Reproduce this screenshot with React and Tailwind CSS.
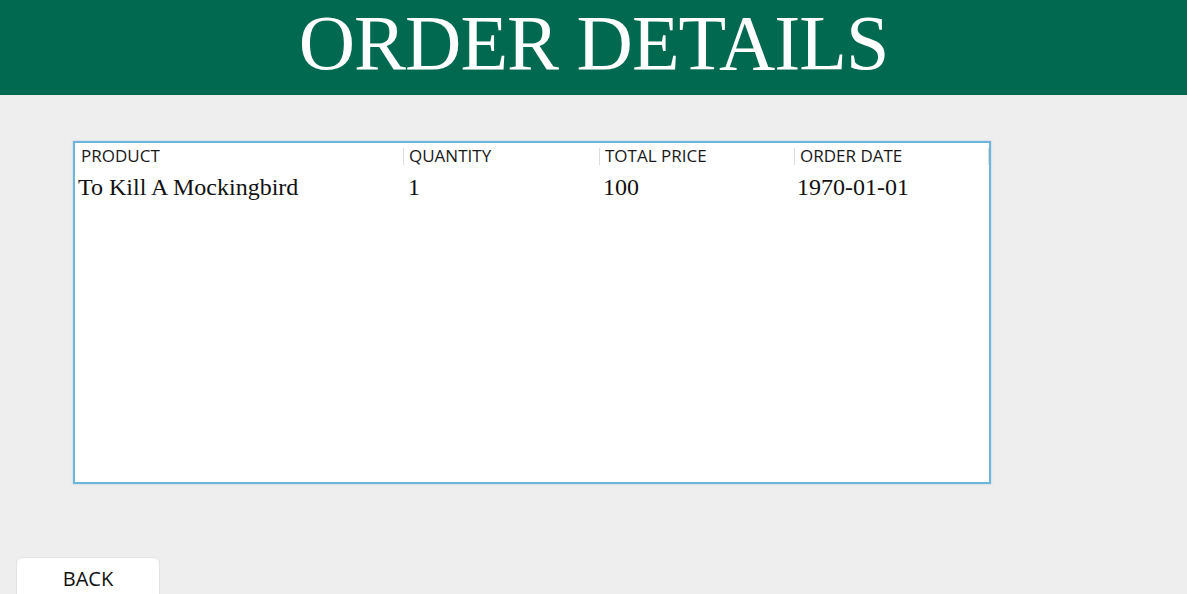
import React from 'react';

const columns = [
  { key: 'product', label: 'PRODUCT', width: 'w-[329px]' },
  { key: 'quantity', label: 'QUANTITY', width: 'w-[196px]' },
  { key: 'price', label: 'TOTAL PRICE', width: 'w-[195px]' },
  { key: 'date', label: 'ORDER DATE', width: 'w-[194px]' },
];

const orders = [
  { product: 'To Kill A Mockingbird', quantity: '1', price: '100', date: '1970-01-01' },
];

export default function App() {
  return (
    <div className="w-[1187px] h-[594px] overflow-hidden bg-[#eeeeee] flex flex-col">
      {/* Header */}
      <header className="h-[95px] shrink-0 bg-[#00694f] flex justify-center items-start">
        <h1 className="text-white text-[78px] leading-none mt-[4px] tracking-[-1px] font-['Liberation_Serif',serif]">
          ORDER DETAILS
        </h1>
      </header>

      {/* Orders table */}
      <div className="pl-[73px] pt-[46px] shrink-0">
        <div className="w-[918px] h-[343px] bg-white border-2 border-[#6db6da] shadow-[0_0_2px_rgba(109,182,218,0.5)]">
          <div className="flex h-[26px] items-center font-['Open_Sans',sans-serif] text-[17px] text-[#1a1a1a]">
            {columns.map((col, i) => (
              <div
                key={col.key}
                className={`${col.width} h-[17px] flex items-center ${i === 0 ? 'pl-[6px]' : 'pl-[5px]'} border-r border-[#dcdcdc]`}
              >
                {col.label}
              </div>
            ))}
          </div>
          {orders.map((o) => (
            <div key={o.product} className="flex h-[36px] items-center font-['Liberation_Serif',serif] text-[24px] text-[#111]">
              <div className="w-[329px] pl-[3px]">{o.product}</div>
              <div className="w-[196px] pl-[4px]">{o.quantity}</div>
              <div className="w-[195px] pl-[3px]">{o.price}</div>
              <div className="w-[194px] pl-[2px]">{o.date}</div>
            </div>
          ))}
        </div>
      </div>

      {/* Back button */}
      <div className="pl-[16px] pt-[73px] shrink-0">
        <button className="w-[144px] h-[44px] bg-white rounded-[6px] border border-[#e2e2e2] flex justify-center pt-[6px] font-['Open_Sans',sans-serif] text-[20px] text-[#111]">
          BACK
        </button>
      </div>
    </div>
  );
}
